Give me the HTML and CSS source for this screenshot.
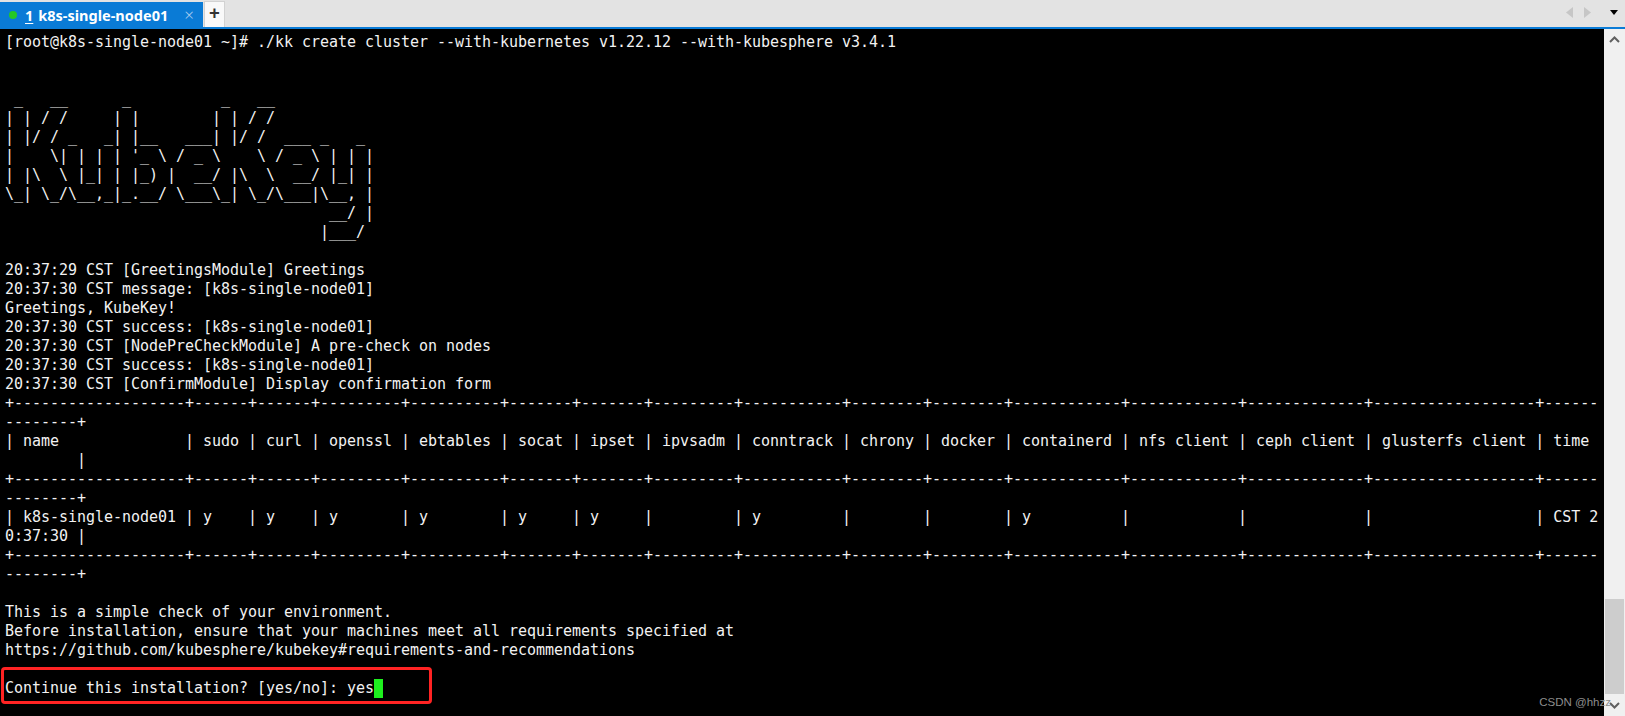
FILE: index.html
```html
<!DOCTYPE html>
<html lang="en">
<head>
<meta charset="utf-8">
<title>k8s-single-node01</title>
<link rel="stylesheet" href="styles.css">
</head>
<body>
<div class="app">
  <div class="tabbar">
    <div class="tab">
      <span class="dot"></span>
      <span class="num">1</span>
      <span class="title">k8s-single-node01</span>
      <span class="close">×</span>
    </div>
    <div class="add">+</div>
    <div class="nav">
      <svg class="nav-left" width="7" height="11" viewBox="0 0 7 11"><polygon points="7,0 7,11 0,5.5" fill="#c6c6c6"/></svg>
      <svg class="nav-right" width="7" height="11" viewBox="0 0 7 11"><polygon points="0,0 0,11 7,5.5" fill="#c6c6c6"/></svg>
      <svg class="nav-menu" width="8" height="5" viewBox="0 0 8 5"><polygon points="0,0 8,0 4,5" fill="#000"/></svg>
    </div>
  </div>
  <div class="main">
    <div class="term">
<pre class="screen">[root@k8s-single-node01 ~]# ./kk create cluster --with-kubernetes v1.22.12 --with-kubesphere v3.4.1


 _   __      _          _   __
| | / /     | |        | | / /
| |/ / _   _| |__   ___| |/ /  ___ _   _
|    \| | | | '_ \ / _ \    \ / _ \ | | |
| |\  \ |_| | |_) |  __/ |\  \  __/ |_| |
\_| \_/\__,_|_.__/ \___\_| \_/\___|\__, |
                                    __/ |
                                   |___/

20:37:29 CST [GreetingsModule] Greetings
20:37:30 CST message: [k8s-single-node01]
Greetings, KubeKey!
20:37:30 CST success: [k8s-single-node01]
20:37:30 CST [NodePreCheckModule] A pre-check on nodes
20:37:30 CST success: [k8s-single-node01]
20:37:30 CST [ConfirmModule] Display confirmation form
+-------------------+------+------+---------+----------+-------+-------+---------+-----------+--------+--------+------------+------------+-------------+------------------+------
--------+
| name              | sudo | curl | openssl | ebtables | socat | ipset | ipvsadm | conntrack | chrony | docker | containerd | nfs client | ceph client | glusterfs client | time 
        |
+-------------------+------+------+---------+----------+-------+-------+---------+-----------+--------+--------+------------+------------+-------------+------------------+------
--------+
| k8s-single-node01 | y    | y    | y       | y        | y     | y     |         | y         |        |        | y          |            |             |                  | CST 2
0:37:30 |
+-------------------+------+------+---------+----------+-------+-------+---------+-----------+--------+--------+------------+------------+-------------+------------------+------
--------+

This is a simple check of your environment.
Before installation, ensure that your machines meet all requirements specified at
https://github.com/kubesphere/kubekey#requirements-and-recommendations

Continue this installation? [yes/no]: yes<span class="cursor"></span></pre>
      <div class="highlight"></div>
    </div>
    <div class="scrollbar">
      <div class="sb-btn">
        <svg width="11" height="7" viewBox="0 0 11 7"><polyline points="1,6 5.5,1.5 10,6" fill="none" stroke="#606060" stroke-width="2"/></svg>
      </div>
      <div class="sb-track"><div class="sb-thumb"></div></div>
      <div class="sb-btn">
        <svg width="11" height="7" viewBox="0 0 11 7"><polyline points="1,1 5.5,5.5 10,1" fill="none" stroke="#606060" stroke-width="2"/></svg>
      </div>
    </div>
    <div class="watermark">CSDN @hhzz</div>
  </div>
</div>
</body>
</html>
```
FILE: styles.css
```css
* { box-sizing: border-box; }
html, body {
  margin: 0;
  padding: 0;
  width: 1625px;
  height: 716px;
  overflow: hidden;
  background: #000;
}
.app {
  display: flex;
  flex-direction: column;
  width: 1625px;
  height: 716px;
}
.tabbar {
  height: 29px;
  flex: none;
  display: flex;
  align-items: flex-end;
  background: #e3e3e3;
  border-bottom: 2px solid #0a7bd6;
  padding-top: 2px;
  font-family: "Noto Sans", "Open Sans", sans-serif;
}
.tab {
  width: 203px;
  height: 25px;
  background: #0a7bd6;
  display: flex;
  align-items: center;
  color: #fff;
  padding-left: 9px;
}
.dot {
  width: 8px;
  height: 8px;
  border-radius: 50%;
  background: #25c825;
  flex: none;
}
.num {
  margin-left: 8px;
  font-size: 14.5px;
  font-weight: 700;
  text-decoration: underline;
  text-underline-offset: 2px;
  line-height: 18px;
}
.title {
  margin-left: 5px;
  font-size: 14.5px;
  font-weight: 700;
  line-height: 18px;
}
.close {
  margin-left: auto;
  margin-right: 9px;
  font-size: 17px;
  line-height: 18px;
  color: #a9cdef;
  font-weight: 300;
}
.add {
  margin-left: 1px;
  width: 21px;
  height: 26px;
  background: #f9f9f9;
  border: 1px solid #d2d2d2;
  border-bottom: none;
  display: flex;
  align-items: center;
  justify-content: center;
  font-size: 19px;
  font-weight: 700;
  color: #333;
  line-height: 1;
  padding-bottom: 2px;
}
.nav {
  margin-left: auto;
  height: 27px;
  display: flex;
  align-items: center;
  padding-right: 7px;
  padding-bottom: 2px;
}
.nav-left { margin-right: 11px; }
.nav-right { margin-right: 19px; }
.main {
  position: relative;
  flex: 1;
  display: flex;
  min-height: 0;
}
.term {
  position: relative;
  flex: 1;
  background: #000;
  overflow: hidden;
}
.screen {
  margin: 0;
  padding: 4px 0 0 5px;
  font-family: "DejaVu Sans Mono", "Liberation Mono", monospace;
  font-size: 15px;
  line-height: 19px;
  letter-spacing: -0.03px;
  color: #f2f2f2;
  white-space: pre;
}
.cursor {
  display: inline-block;
  width: 9px;
  height: 19px;
  vertical-align: top;
  background: #1ef01e;
}
.highlight {
  position: absolute;
  left: 1px;
  top: 638px;
  width: 431px;
  height: 37px;
  border: 3px solid #ff2323;
  border-radius: 4px;
}
.scrollbar {
  width: 21px;
  flex: none;
  background: #f0f0f0;
  display: flex;
  flex-direction: column;
}
.sb-btn {
  height: 21px;
  flex: none;
  display: flex;
  align-items: center;
  justify-content: center;
}
.sb-track {
  flex: 1;
  display: flex;
  flex-direction: column;
  justify-content: flex-end;
}
.sb-thumb {
  height: 95px;
  margin: 0 1px 1px 1px;
  background: #cdcdcd;
}
.watermark {
  position: absolute;
  right: 14px;
  bottom: 7px;
  font-family: "Liberation Sans", Arial, sans-serif;
  font-size: 11.5px;
  line-height: 13px;
  color: #8d8d8d;
}
```
